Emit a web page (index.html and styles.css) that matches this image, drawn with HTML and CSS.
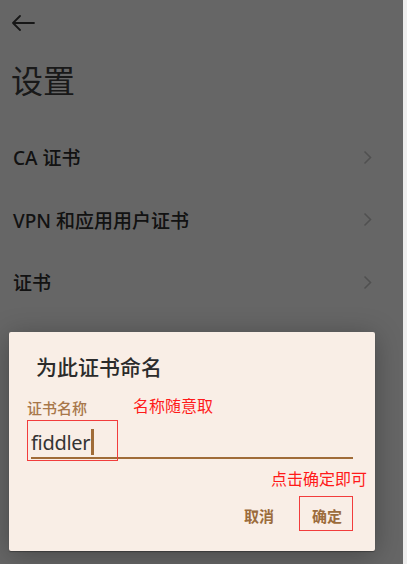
FILE: index.html
```html
<!DOCTYPE html>
<html lang="zh-CN">
<head>
  <meta charset="UTF-8">
  <meta name="viewport" content="width=device-width, initial-scale=1.0">
  <title>设置</title>
  <link rel="stylesheet" href="styles.css">
</head>
<body>
  <div class="screen">
    <div class="topbar">
      <svg class="back" width="24" height="16" viewBox="0 0 24 16">
        <path d="M23 8H2M9 1L2 8l7 7" fill="none" stroke="#3a3a3a" stroke-width="1.8" stroke-linecap="round" stroke-linejoin="round"/>
      </svg>
    </div>
    <h1 class="page-title">设置</h1>

    <div class="list">
      <div class="row">
        <span>CA 证书</span>
        <svg class="chevron" width="9" height="15" viewBox="0 0 9 15"><path d="M1.5 1.5l6 6-6 6" fill="none" stroke="#c8c8c8" stroke-width="1.6"/></svg>
      </div>
      <div class="row">
        <span>VPN 和应用用户证书</span>
        <svg class="chevron" width="9" height="15" viewBox="0 0 9 15"><path d="M1.5 1.5l6 6-6 6" fill="none" stroke="#c8c8c8" stroke-width="1.6"/></svg>
      </div>
      <div class="row">
        <span>证书</span>
        <svg class="chevron" width="9" height="15" viewBox="0 0 9 15"><path d="M1.5 1.5l6 6-6 6" fill="none" stroke="#c8c8c8" stroke-width="1.6"/></svg>
      </div>
    </div>

    <!-- dim layer + dialog -->
    <div class="overlay">
      <div class="dialog">
        <h2 class="dialog-title">为此证书命名</h2>
        <div class="field">
          <label class="field-label">证书名称</label>
          <div class="field-input">
            <span class="value">fiddler</span><span class="caret"></span>
          </div>
        </div>
        <div class="actions">
          <button class="btn">取消</button>
          <button class="btn">确定</button>
        </div>

        <!-- annotations -->
        <span class="note note-name">名称随意取</span>
        <span class="note note-ok">点击确定即可</span>
        <div class="mark mark-input"></div>
        <div class="mark mark-ok"></div>
      </div>
    </div>
  </div>
</body>
</html>
```

FILE: styles.css
```css
html {
  background: #eeeeee;
}

body {
  margin: 0;
  padding: 0;
  font-family: "Noto Sans", "Noto Sans CJK SC", sans-serif;
  color: #444;
}

.screen {
  position: relative;
  width: 403px;
  height: 564px;
  background: #ffffff;
  overflow: hidden;
}

.topbar {
  height: 46px;
  padding-left: 11px;
  display: flex;
  align-items: center;
}

.back {
  display: block;
  margin-top: -1px;
}

.page-title {
  margin: 15px 0 0 11px;
  font-size: 32px;
  line-height: 40px;
  font-weight: 400;
  color: #404040;
}

.list {
  margin-top: 25px;
}

.row {
  height: 62.5px;
  padding: 0 31px 0 13px;
  display: flex;
  align-items: center;
  justify-content: space-between;
  font-size: 19px;
  font-weight: 500;
  color: #2e2e2e;
}

.chevron {
  display: block;
}

.overlay {
  position: absolute;
  inset: 0;
  background: rgba(0, 0, 0, 0.6);
  display: flex;
  align-items: flex-end;
  padding: 0 28px 13px 9px;
}

.dialog {
  position: relative;
  width: 366px;
  height: 219px;
  box-sizing: border-box;
  background: #f9eee6;
  border-radius: 2px;
  box-shadow: 0 4px 28px rgba(0, 0, 0, 0.3), 0 1px 1px rgba(0, 0, 0, 0.3);
  padding: 20px 22px 0 18px;
}

.dialog-title {
  margin: 0 0 0 9px;
  font-size: 21px;
  line-height: 30px;
  font-weight: 500;
  color: #2b2b2b;
}

.field {
  margin-top: 16px;
}

.field-label {
  display: block;
  font-size: 15px;
  line-height: 20px;
  font-weight: 500;
  color: #a8774a;
}

.field-input {
  margin-left: 4px;
  margin-top: 9px;
  height: 30px;
  border-bottom: 2px solid #a06c38;
  display: flex;
  align-items: center;
}

.value {
  font-size: 20px;
  color: #333;
  letter-spacing: -0.3px;
}

.caret {
  width: 2.5px;
  height: 26px;
  margin-left: 1px;
  background: #a06c38;
}

.actions {
  display: flex;
  justify-content: flex-end;
  gap: 38px;
  margin-top: 47px;
  padding-right: 11px;
}

.btn {
  background: none;
  border: none;
  padding: 0;
  font-family: "Noto Sans CJK SC", sans-serif;
  font-size: 15px;
  line-height: 20px;
  font-weight: 700;
  color: #9c6c3c;
}

.note {
  position: absolute;
  font-family: "Noto Sans CJK SC", sans-serif;
  font-size: 16px;
  line-height: 20px;
  color: #ff1a1a;
}

.note-name {
  left: 124px;
  top: 63px;
}

.note-ok {
  left: 262px;
  top: 136px;
}

.mark {
  position: absolute;
  border: 1px solid #f23c3c;
}

.mark-input {
  left: 18px;
  top: 88px;
  width: 89px;
  height: 39px;
}

.mark-ok {
  left: 290px;
  top: 164px;
  width: 52px;
  height: 33px;
}
```
